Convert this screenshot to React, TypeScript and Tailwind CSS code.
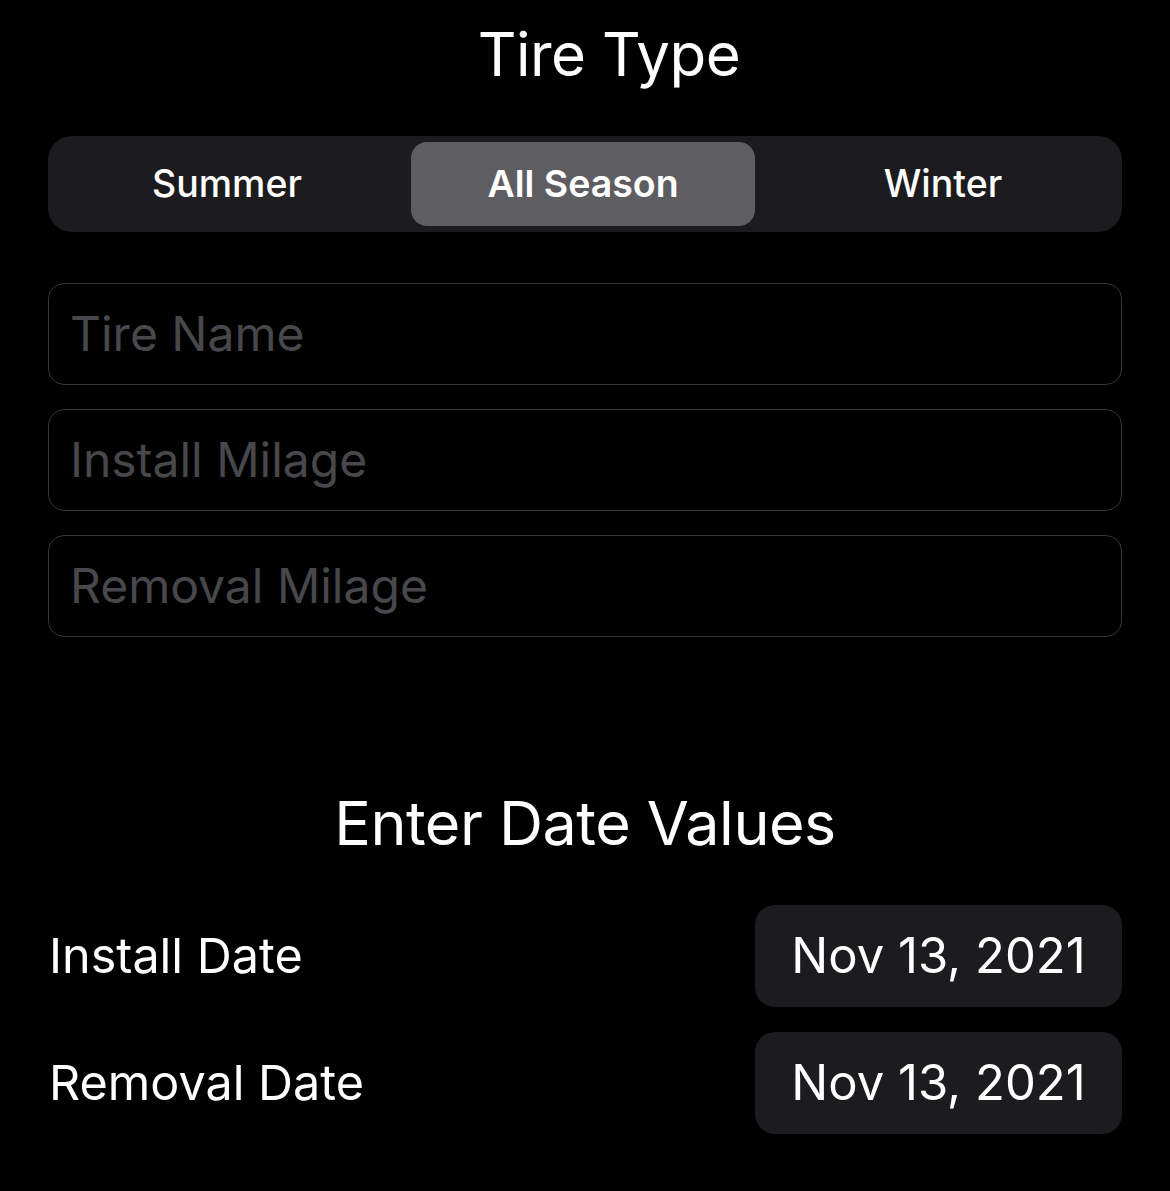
import React from "react";

export default function App() {
  const segs = ["Summer", "All Season", "Winter"];
  const font = { fontFamily: "Inter, 'Liberation Sans', sans-serif" };
  return (
    <div className="w-[1170px] h-[1191px] bg-black text-white overflow-hidden" style={font}>
      <div className="px-[48px] pt-[14px] flex flex-col">
        <h1 className="text-center text-[60px] leading-[80px] font-normal tracking-[-0.5px] h-[80px] ml-[48px]">Tire Type</h1>
        <div className="mt-[42px] h-[96px] rounded-[24px] bg-[#1c1c1e] py-[6px] grid grid-cols-3">
          {segs.map((s, i) => (
            <div
              key={s}
              className={
                i === 1
                  ? "flex items-center justify-center rounded-[16px] bg-[#5e5e62] text-[37.5px] font-semibold ml-[5px] mr-[9px]"
                  : "flex items-center justify-center text-[37.5px] font-medium"
              }
            >
              {s}
            </div>
          ))}
        </div>
        <div className="mt-[51px] flex flex-col gap-[24px]">
          {["Tire Name", "Install Milage", "Removal Milage"].map((p) => (
            <div key={p} className="h-[102px] rounded-[16px] border border-[#38383a] flex items-center px-[21px]">
              <span className="text-[48px] text-[#48484c]">{p}</span>
            </div>
          ))}
        </div>
        <h2 className="mt-[146px] text-center text-[61px] leading-[80px] font-normal tracking-[-0.5px]">Enter Date Values</h2>
        <div className="mt-[42px] flex flex-col gap-[25px]">
          {["Install Date", "Removal Date"].map((l) => (
            <div key={l} className="flex items-center justify-between">
              <span className="text-[48.5px] pl-[1px]">{l}</span>
              <div className="w-[367px] h-[102px] rounded-[20px] bg-[#1c1c1e] flex items-center justify-center text-[49px]">
                Nov 13, 2021
              </div>
            </div>
          ))}
        </div>
      </div>
    </div>
  );
}
